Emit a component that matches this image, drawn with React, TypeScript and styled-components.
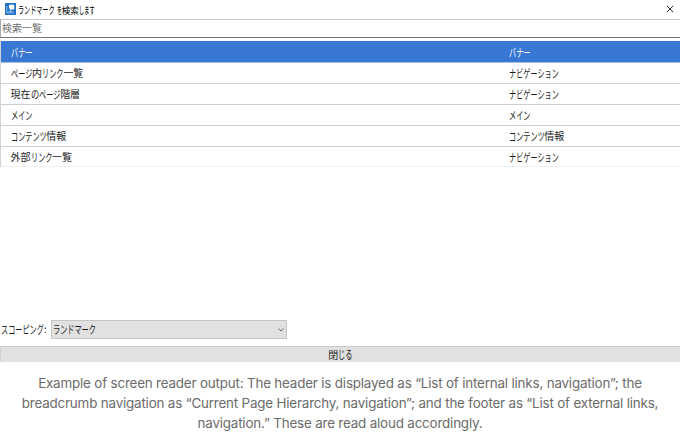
import React from 'react';
import styled, { createGlobalStyle } from 'styled-components';

const GlobalStyle = createGlobalStyle`
  * { box-sizing: border-box; }
  body { margin: 0; background: #fff; overflow: hidden; }
`;

const Page = styled.main`
  width: 680px;
  height: 432px;
  display: flex;
  flex-direction: column;
  background: #fff;
  color: #1c1c1c;
  font: 10px/20px 'Noto Sans CJK JP', sans-serif;
`;

const TitleBar = styled.header`
  height: 19px;
  flex: none;
  display: flex;
  align-items: center;
  padding: 0 6px 0 5px;
  gap: 2px;
  font-size: 8.6px;
  line-height: 16px;
  color: #000;
`;

const AppIcon = styled.svg`
  width: 11px;
  height: 12px;
  flex: none;
  margin-top: -2px;
`;

const CloseIcon = styled.svg`
  width: 8px;
  height: 8px;
  margin-left: auto;
  margin-top: -1px;
`;

const Search = styled.div`
  height: 19px;
  flex: none;
  border: 1px solid #a8a8a8;
  border-top-color: #c8c8c8;
  border-bottom-color: #767676;
  border-right: none;
  padding-left: 1px;
  line-height: 16px;
  color: #707070;
`;

const List = styled.div`
  height: 126px;
  flex: none;
  margin-top: 3px;
  border-left: 1px solid #d4d4d4;
`;

const Row = styled.div<{ $selected?: boolean }>`
  height: ${p => (p.$selected ? 22 : 21)}px;
  display: grid;
  grid-template-columns: 498px 1fr;
  padding: ${p => (p.$selected ? 1 : 0)}px 0 0 9.5px;
  border-bottom: 1px solid ${p => (p.$selected ? '#a9bfe0' : '#cfcfcf')};
  background: ${p => (p.$selected ? '#3878d4' : '#fff')};
  color: ${p => (p.$selected ? '#fff' : '#1c1c1c')};
  &:last-child { height: 20px; border-bottom-color: #f0f0f0; }
`;

const Scope = styled.div`
  height: 19px;
  flex: none;
  margin-top: 153px;
  padding-left: 1px;
  display: flex;
  line-height: 18px;
`;

const ScopeLabel = styled.label`
  width: 50px;
  white-space: nowrap;
`;

const Select = styled.div`
  width: 236px;
  height: 19px;
  background: #e1e1e1;
  border: 1px solid #c6c6c6;
  display: flex;
  align-items: center;
  justify-content: space-between;
  padding: 0 2px 0 1px;
  line-height: 17px;
`;

const Chevron = styled.svg`
  width: 6px;
  height: 4px;
`;

const CloseButton = styled.div`
  height: 16px;
  flex: none;
  margin-top: 7px;
  background: #e1e1e1;
  border-top: 1px solid #cbcbcb;
  border-left: 1px solid #d2d2d2;
  text-align: center;
  line-height: 15px;
`;

const Caption = styled.p`
  margin: 11px 0 0;
  font: 13.4px/20px Inter, sans-serif;
  letter-spacing: -0.18px;
  color: #6b6b6b;
  text-align: center;
`;

const CaptionLine = styled.span`
  display: block;
  white-space: nowrap;
`;

const Label = styled.span`
  display: inline-flex;
  white-space: pre;
`;

const Kana = styled.span<{ $count: number; $advance: number; $size: number }>`
  display: inline-block;
  width: ${p => p.$count * p.$advance}px;
  font-size: ${p => p.$size}px;
  transform: scaleX(${p => p.$advance / p.$size});
  transform-origin: left;
`;

interface TextProps {
  children: string;
  advance?: number;
  hiragana?: number;
  size?: number;
}

/* Sets kana in a condensed width next to full-width kanji. */
function Text({ children, advance = 7.15, hiragana = 8.2, size = 11.4 }: TextProps) {
  const runs = children.match(/[\u3041-\u309f]+|[\u30a0-\u30ff]+|[^\u3041-\u30ff]+/g) ?? [];
  return (
    <Label>
      {runs.map((run, i) =>
        /[\u3041-\u30ff]/.test(run) ? (
          <Kana
            key={i}
            $count={run.length}
            $size={size}
            $advance={/[\u3041-\u309f]/.test(run) ? hiragana : advance}
          >
            {run}
          </Kana>
        ) : (
          <span key={i}>{run}</span>
        ),
      )}
    </Label>
  );
}

const rows = [
  ['バナー', 'バナー'],
  ['ページ内リンク一覧', 'ナビゲーション'],
  ['現在のページ階層', 'ナビゲーション'],
  ['メイン', 'メイン'],
  ['コンテンツ情報', 'コンテンツ情報'],
  ['外部リンク一覧', 'ナビゲーション'],
];

export default function App() {
  return (
    <>
      <GlobalStyle />
      <Page>
        <TitleBar>
          <AppIcon viewBox="0 0 11 12">
            <rect width="11" height="12" rx="0.5" fill="#2371c4" />
            <path d="M4 2.2Q6.5 .8 9.3 2.2V5.8Q8 7 6.4 6.6L5 8V6.2Q3.5 5.2 4 2.2Z" fill="#fff" />
            <path d="M1.8 3V9.8H9M3.4 8.6H7.5" fill="none" stroke="#a9d2f4" strokeWidth=".8" />
          </AppIcon>
          <Text advance={6.1} hiragana={5.2} size={10.2}>ランドマーク を検索します</Text>
          <CloseIcon viewBox="0 0 8 8">
            <path d="M.8 .8L7.2 7.2M7.2 .8L.8 7.2" stroke="#333" strokeWidth="1" />
          </CloseIcon>
        </TitleBar>
        <Search><Text>検索一覧</Text></Search>
        <List>
          {rows.map(([name, kind], i) => (
            <Row key={name} $selected={i === 0}>
              <Text>{name}</Text>
              <Text>{kind}</Text>
            </Row>
          ))}
        </List>
        <Scope>
          <ScopeLabel><Text>スコーピング:</Text></ScopeLabel>
          <Select>
            <Text>ランドマーク</Text>
            <Chevron viewBox="0 0 6 4">
              <path d="M.5 .5L3 3L5.5 .5" fill="none" stroke="#555" strokeWidth=".9" />
            </Chevron>
          </Select>
        </Scope>
        <CloseButton><Text hiragana={7.2}>閉じる</Text></CloseButton>
        <Caption>
          <CaptionLine>Example of screen reader output: The header is displayed as “List of internal links, navigation”; the</CaptionLine>
          <CaptionLine>breadcrumb navigation as “Current Page Hierarchy, navigation”; and the footer as “List of external links,</CaptionLine>
          <CaptionLine>navigation.” These are read aloud accordingly.</CaptionLine>
        </Caption>
      </Page>
    </>
  );
}
